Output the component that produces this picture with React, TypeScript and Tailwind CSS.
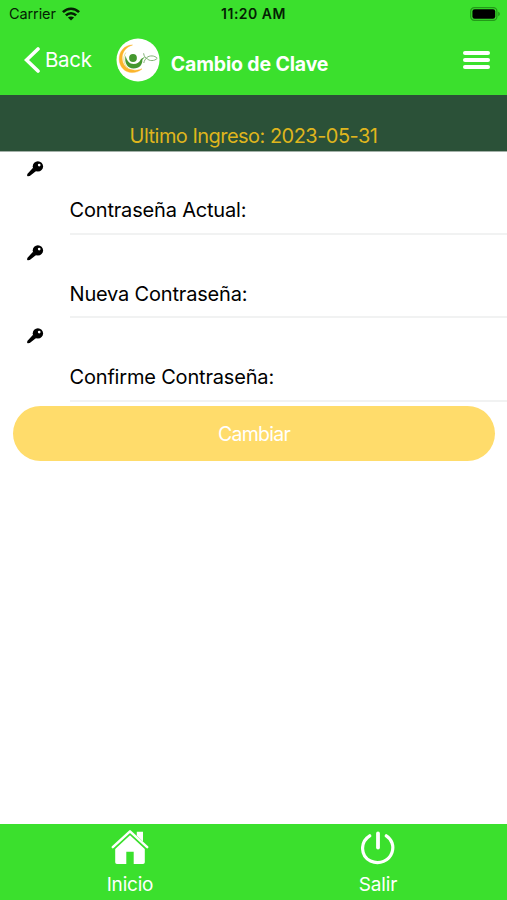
import { useState } from "react";

const fields = [
  { id: "actual", label: "Contraseña Actual:" },
  { id: "nueva", label: "Nueva Contraseña:" },
  { id: "confirme", label: "Confirme Contraseña:" },
];

function WifiIcon() {
  return (
    <svg width="18" height="14" viewBox="0 0 18 14" fill="none" stroke="#042003" strokeWidth="2.6">
      <path d="M0.9 5.2C5.5 0.5 12.5 0.5 17.1 5.2" />
      <path d="M3.9 8.4C6.8 5.5 11.2 5.5 14.1 8.4" />
      <path d="M9 13.6L5.9 10.6C7.7 9 10.3 9 12.1 10.6Z" fill="#042003" stroke="none" />
    </svg>
  );
}

function BatteryIcon() {
  return (
    <svg width="31" height="14" viewBox="0 0 31 14">
      <rect x="0.7" y="0.7" width="26.2" height="12.6" rx="3.6" fill="none" stroke="#239a19" strokeWidth="1.2" />
      <rect x="2.4" y="2.3" width="22.8" height="9.4" rx="2.2" fill="#000" />
      <path d="M28.2 4.8C30.4 5.5 30.4 8.5 28.2 9.2Z" fill="#239a19" />
    </svg>
  );
}

function Logo() {
  return (
    <svg width="44" height="44" viewBox="0 0 44 44">
      <circle cx="22" cy="22" r="21.5" fill="#fff" />
      <path d="M16.5 7C8 7 3 14 3.2 21.5C3.5 29 9 34.5 16 34.6C20 34.6 23.5 33.3 26 30.8C22.5 32.3 20 32.4 17.5 32C10.5 31.5 6.2 26.5 6.2 20C6.2 14 10 9 16.5 7Z" fill="#fbb42a" stroke="#fbb42a" strokeWidth="0.4" />
      <path d="M9.8 14.5C6.5 19.5 7.5 26.5 12 30" fill="none" stroke="#e0da8c" strokeWidth="0.9" />
      <circle cx="17" cy="20" r="3.9" fill="#45982f" />
      <path d="M9.6 17.5C8 25 11.6 30.6 17.6 30.6C23.6 30.6 26.6 26.5 26.4 21.8L29.3 18.6L25 21C23.6 24.6 21 26 17.6 26C13.5 26 10.8 23 9.6 17.5Z" fill="#45982f" />
      <path d="M27.6 15.3C28 18.2 29.3 20 31.2 20.7C33 23.2 38.7 23.3 41.2 20.3C38.8 17.3 33.3 17.2 30.8 19.6C29.3 21.1 28.2 22.8 27.8 25" fill="none" stroke="#75a967" strokeWidth="0.9" />
    </svg>
  );
}

function KeyIcon() {
  return (
    <svg width="18" height="18" viewBox="0 0 18 18">
      <path d="M7.5 8.5L2.2 14.3L2 15.4L3.2 15.2L9.6 10.2" fill="#000" stroke="#000" strokeWidth="1.8" strokeLinejoin="round" />
      <circle cx="11.9" cy="6.4" r="5.2" fill="#000" />
      <circle cx="13.2" cy="5.1" r="1.35" fill="#fff" />
    </svg>
  );
}

function HomeIcon() {
  return (
    <svg width="38" height="36" viewBox="0 0 38 36" fill="#fff">
      <path d="M1.8 18.2L19 2.3L36.2 18.2" fill="none" stroke="#fff" strokeWidth="2.5" strokeLinecap="round" strokeLinejoin="round" />
      <path d="M25.8 2.8H32V12.5L25.8 6.8Z" />
      <path d="M19 6.3L33.8 20V33.2Q33.8 35 32 35H22.7V22.8H15.3V35H6Q4.2 35 4.2 33.2V20Z" />
    </svg>
  );
}

function PowerIcon() {
  return (
    <svg width="34" height="34" viewBox="0 0 34 34" fill="none" stroke="#fff" strokeWidth="3.2" strokeLinecap="round">
      <path d="M17 2.5V16.5" strokeWidth="3.8" />
      <path d="M8.7 4.8C-1.4 11 -0.4 25.4 9.5 30C18.5 34.2 28.2 29.6 31 21.5C33.3 14.7 30.6 8.1 25.3 4.8" />
    </svg>
  );
}

export default function App() {
  const [values, setValues] = useState<Record<string, string>>({});

  return (
    <div className="flex h-[900px] w-[507px] flex-col overflow-hidden bg-white font-['Inter','Liberation_Sans',sans-serif] text-black">
      <header className="h-[95px] shrink-0 bg-[#3be02d]">
        <div className="grid h-[27px] grid-cols-3 items-center pl-[7px] pr-[7px] text-[#042003]">
          <div className="flex items-center gap-[6px] pl-[2px]">
            <span className="text-[14.5px] tracking-[-0.1px]">Carrier</span>
            <WifiIcon />
          </div>
          <span className="text-center text-[14px] font-semibold tracking-[0.5px]">11:20 AM</span>
          <div className="-mr-px flex justify-end">
            <BatteryIcon />
          </div>
        </div>
        <div className="flex h-[66px] items-center pl-[24px] pr-[17px] text-white">
          <button className="flex items-center gap-[5px]">
            <svg width="16" height="26" viewBox="0 0 16 26" fill="none" stroke="#fff" strokeWidth="3.6" strokeLinecap="round">
              <path d="M14 2L2.5 13L14 24" />
            </svg>
            <span className="text-[20.5px] tracking-[-0.3px]">Back</span>
          </button>
          <div className="ml-[24px]">
            <Logo />
          </div>
          <h1 className="ml-[11px] mt-[9px] text-[19.5px] font-bold tracking-[-0.15px]">Cambio de Clave</h1>
          <button className="ml-auto flex w-[27px] flex-col gap-[3px]" aria-label="Menu">
            <span className="h-[4px] rounded-full bg-white" />
            <span className="h-[4px] rounded-full bg-white" />
            <span className="h-[4px] rounded-full bg-white" />
          </button>
        </div>
      </header>

      <div className="flex h-[57px] shrink-0 items-end justify-center border-b border-[#a3b0a8] bg-[#2b5138] pb-[3px] text-[20px] leading-[24px] tracking-[-0.53px] text-[#dfb51d]">
        Ultimo Ingreso: 2023-05-31
      </div>

      <main className="-mt-px flex-1">
        {fields.map((field) => (
          <div key={field.id} className="flex h-[83.5px]">
            <div className="w-[70px] shrink-0 pl-[26px] pt-[9px]">
              <KeyIcon />
            </div>
            <label className="flex flex-1 items-end border-b-2 border-[#f1f2f2] pb-[10.5px] text-[20px] leading-[24px]">
              <span className="-ml-[0.5px] tracking-[-0.18px]">{field.label}</span>
              <input
                type="password"
                className="min-w-0 flex-1 bg-transparent outline-none"
                value={values[field.id] ?? ""}
                onChange={(e) => setValues({ ...values, [field.id]: e.target.value })}
              />
            </label>
          </div>
        ))}
        <button className="ml-[13px] mt-[4.5px] block h-[55px] w-[482px] rounded-full bg-[#ffdc6b] pt-[2px] text-[19.5px] tracking-[-0.75px] text-white">
          Cambiar
        </button>
      </main>

      <footer className="flex h-[76px] shrink-0 bg-[#3be02d] text-[19px] leading-[24px] text-white">
        <button className="flex w-[260px] flex-col items-center pt-[5px]">
          <HomeIcon />
          <span className="mt-[8px] tracking-[-0.2px]">Inicio</span>
        </button>
        <button className="flex w-[236px] flex-col items-center pt-[7px]">
          <PowerIcon />
          <span className="mt-[8px] tracking-[-0.1px]">Salir</span>
        </button>
      </footer>
    </div>
  );
}
